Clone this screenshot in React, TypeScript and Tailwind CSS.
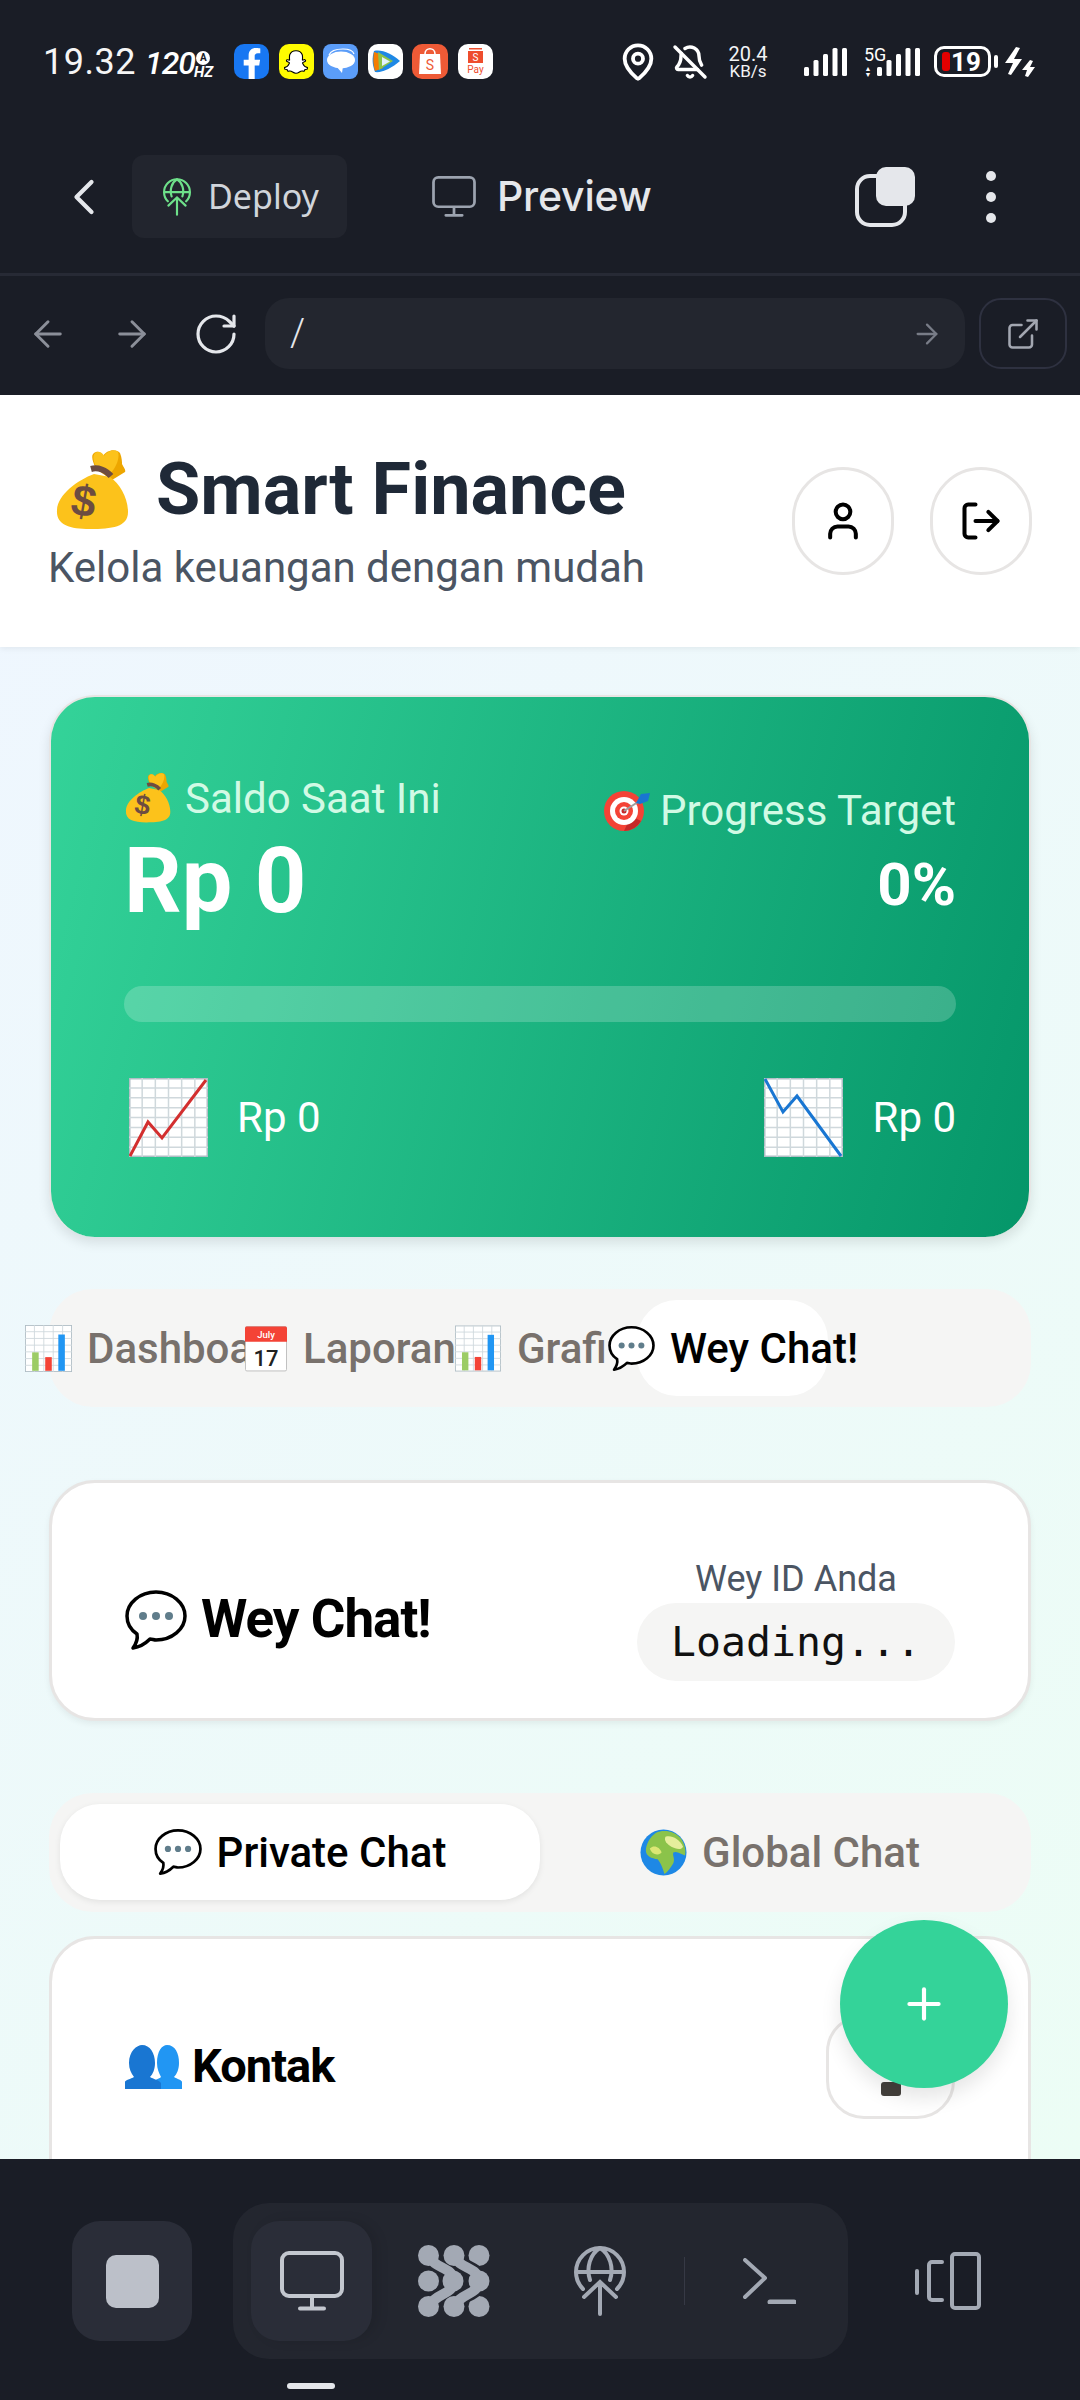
import React from "react";
import { ArrowLeft, ArrowRight, BellOff, ChevronLeft, ExternalLink, LogOut, MapPin, Plus, RotateCw, User } from "lucide-react";
import { FaFacebookF, FaSnapchatGhost } from "react-icons/fa";

type P = { className?: string };

const MoneyBag = ({ className }: P) => (
  <svg viewBox="0 0 75 80" className={className}>
    <path d="M46 19 C42 10 40 4 46 2 C50 1 52 4 53 6 C56 0 66 -2 70 3 C72 8 72 12 72 14 C74 18 76 20 75 22 L62 30 Z" fill="#eda600" transform="translate(-4 0)" />
    <path d="M44 20 C38 10 38 4 43 2 C47 1 49 4 50 6 C53 1 61 -1 64 2 C66 8 62 18 56 24 Z" fill="#fcc21b" />
    <path d="M40 24 C24 30 4 44 3 60 C2 75 15 79 36 79 C58 79 74 77 74 62 C74 48 66 34 56 27 Z" fill="#fcc21b" />
    <path d="M37 19 C44 17 52 20 57 26" stroke="#6d4c41" strokeWidth="6" fill="none" />
    <text x="30" y="66" fontFamily="Liberation Sans" fontWeight="700" fontSize="44" fill="#6d4c41" textAnchor="middle" transform="rotate(10 30 50)">$</text>
  </svg>
);

const Target = ({ className }: P) => (
  <svg viewBox="0 0 48 44" className={className}>
    <circle cx="21" cy="23" r="20" fill="#f44336" />
    <path d="M21 43 A20 20 0 0 0 38 33 L28 28 Z" fill="#c62828" />
    <circle cx="21" cy="23" r="14" fill="#fff" />
    <circle cx="21" cy="23" r="9" fill="#f44336" />
    <circle cx="21" cy="23" r="4.5" fill="#fff" />
    <circle cx="21" cy="23" r="2.5" fill="#c62828" />
    <path d="M21 23 L38 12" stroke="#9e9e9e" strokeWidth="2" />
    <path d="M33 15 L38 6 L47 5 L45 13 L37 16 Z" fill="#1976d2" />
  </svg>
);

const Grid = ({ n = 6, m = 8 }: { n?: number; m?: number }) => (
  <>
    <rect x="0.75" y="0.75" width="77.5" height="77.5" fill="#fff" stroke="#b0bec5" strokeWidth="1.5" />
    {Array.from({ length: n - 1 }, (_, i) => (
      <path key={`v${i}`} d={`M${((i + 1) * 79) / n} 0V79`} stroke="#cfd8dc" strokeWidth="1.5" />
    ))}
    {Array.from({ length: m - 1 }, (_, i) => (
      <path key={`h${i}`} d={`M0 ${((i + 1) * 79) / m}H79`} stroke="#cfd8dc" strokeWidth="1.5" />
    ))}
  </>
);

const ChartUp = ({ className }: P) => (
  <svg viewBox="0 0 79 79" className={className}>
    <Grid />
    <path d="M1 78 L19 44 L33 60 L77 2" stroke="#d32f2f" strokeWidth="3" fill="none" />
  </svg>
);
const ChartDown = ({ className }: P) => (
  <svg viewBox="0 0 79 79" className={className}>
    <Grid />
    <path d="M1 1 L19 34 L33 18 L77 78" stroke="#1976d2" strokeWidth="3" fill="none" />
  </svg>
);
const BarChart = ({ className }: P) => (
  <svg viewBox="0 0 79 79" className={className}>
    <Grid n={5} m={7} />
    <rect x="12" y="46" width="11" height="31" fill="#9ccc65" />
    <rect x="34" y="54" width="11" height="23" fill="#f44336" />
    <rect x="56" y="16" width="11" height="61" fill="#2196f3" />
  </svg>
);
const Calendar = ({ className }: P) => (
  <svg viewBox="0 0 44 48" className={className}>
    <rect x="0.5" y="1" width="43" height="46.5" rx="1.5" fill="#fff" stroke="#bdbdbd" />
    <path d="M0 2.5 A2 2 0 0 1 2 1 H42 A2 2 0 0 1 44 2.5 V17 H0 Z" fill="#f44336" />
    <text x="22" y="13" fontFamily="Roboto" fontSize="10" fill="#fff" textAnchor="middle">July</text>
    <text x="22" y="42" fontFamily="Roboto" fontWeight="500" fontSize="23" fill="#212121" textAnchor="middle">17</text>
  </svg>
);
const Bubble = ({ className }: P) => (
  <svg viewBox="0 0 62 62" className={className}>
    <path d="M31 3 C15 3 2 14 2 27 C2 35 6 41 12 45 C13 50 11 55 8 59 C15 58 21 54 25 50 C27 50 29 51 31 51 C47 51 60 40 60 27 C60 14 47 3 31 3 Z" fill="#fff" stroke="#000" strokeWidth="3.5" strokeLinejoin="round" />
    <circle cx="18" cy="27" r="4" fill="#607d8b" />
    <circle cx="31" cy="27" r="4" fill="#607d8b" />
    <circle cx="44" cy="27" r="4" fill="#607d8b" />
  </svg>
);
const Globe = ({ className }: P) => (
  <svg viewBox="0 0 48 48" className={className}>
    <circle cx="24" cy="24" r="23.5" fill="#1e88e5" />
    <path d="M16 4 C24 0 36 2 42 10 C46 16 47 22 46 27 C42 26 38 22 34 24 C33 28 36 30 34 35 C31 40 28 44 25 46 C23 40 22 36 18 31 C12 30 6 28 6 22 C6 16 10 8 16 4 Z" fill="#8bc34a" />
    <path d="M26 8 C32 6 40 10 44 18 C42 22 36 20 32 18 C28 16 24 12 26 8 Z" fill="#e6ee9c" />
    <path d="M10 20 C14 16 20 18 22 24 C18 28 12 26 10 20 Z" fill="#dce775" />
  </svg>
);
const Busts = ({ className }: P) => (
  <svg viewBox="0 0 57 44" className={className}>
    <path d="M32 18 C32 6 37 0 42 0 C50 0 54 8 54 18 C54 24 52 29 49 32 C52 34 57 35 57 37 V44 H28 V37 C30 34 34 34 36 32 C34 28 32 24 32 18 Z" fill="#2196f3" />
    <path d="M4 18 C4 6 12 0 17 0 C25 0 30 8 30 18 C30 24 28 29 25 32 C28 34 34 35 36 38 V44 H0 V37 C0 35 6 34 9 32 C6 28 4 24 4 18 Z" fill="#1976d2" />
  </svg>
);

const MonitorIcon = ({ className }: P) => (
  <svg viewBox="0 0 64 60" fill="none" stroke="currentColor" strokeWidth="4" strokeLinecap="round" className={className}>
    <rect x="2" y="2" width="60" height="43" rx="7" />
    <path d="M32 46 V56 M20 57.5 H44" />
  </svg>
);
const GlobeUp = ({ className, sw = 4 }: P & { sw?: number }) => (
  <svg viewBox="0 0 52 70" fill="none" stroke="currentColor" strokeWidth={sw} strokeLinecap="round" className={className}>
    <path d="M9 43 A24 24 0 1 1 43 43" />
    <path d="M16 34 C12 22 16 8 26 2 C36 8 40 22 36 34" />
    <path d="M3 26 H49" />
    <path d="M26 36 V68 M10 51 L26 36 L42 51" />
  </svg>
);
const chevA = "M11 11 C16 24 36 22 36 36 C36 50 16 48 11 62";
const chevB = "M36 11 C41 24 61 22 61 36 C61 50 41 48 36 62";
const Blobs = ({ className }: P) => (
  <svg viewBox="0 0 72 72" className={className} fill="#a3a9b4">
    <circle cx="10.5" cy="36" r="10.5" />
    <circle cx="61" cy="10.5" r="10.5" />
    <circle cx="61" cy="61.5" r="10.5" />
    <path d={chevA} fill="none" stroke="#23262f" strokeWidth="15" />
    <path d={chevA} fill="none" stroke="#a3a9b4" strokeWidth="10" />
    <circle cx="10.5" cy="10.5" r="10.5" />
    <circle cx="35" cy="36" r="10.5" />
    <circle cx="10.5" cy="61.5" r="10.5" />
    <path d={chevB} fill="none" stroke="#23262f" strokeWidth="15" />
    <path d={chevB} fill="none" stroke="#a3a9b4" strokeWidth="10" />
    <circle cx="36" cy="10.5" r="10.5" />
    <circle cx="61" cy="36" r="10.5" />
    <circle cx="36" cy="61.5" r="10.5" />
  </svg>
);
const Terminal = ({ className }: P) => (
  <svg viewBox="0 0 53 46" fill="none" stroke="currentColor" strokeWidth="4" strokeLinecap="round" strokeLinejoin="round" className={className}>
    <path d="M2 2 L22 20 L2 39" />
    <path d="M27 44 H51" strokeWidth="5" />
  </svg>
);
const DeviceIcon = ({ className }: P) => (
  <svg viewBox="0 0 66 58" fill="none" stroke="currentColor" strokeWidth="4" strokeLinecap="round" strokeLinejoin="round" className={className}>
    <path d="M2 19 V41" />
    <path d="M27 10 H17 A3 3 0 0 0 14 13 V45 A3 3 0 0 0 17 48 H27" />
    <rect x="37" y="2" width="27" height="54" rx="3" />
  </svg>
);
const CopyIcon = ({ className }: P) => (
  <svg viewBox="0 0 60 60" className={className}>
    <rect x="2" y="9" width="48" height="49" rx="13" fill="none" stroke="#e5e7eb" strokeWidth="4" />
    <rect x="21" y="0" width="39" height="39" rx="10" fill="#e5e7eb" />
  </svg>
);

const Bars = ({ className }: P) => (
  <svg viewBox="0 0 44 30" fill="#fff" className={className}>
    <rect x="0" y="20" width="5" height="9" rx="1.5" />
    <rect x="9.5" y="13" width="5" height="16" rx="1.5" />
    <rect x="19" y="7" width="5" height="22" rx="1.5" />
    <rect x="28.5" y="1" width="5" height="28" rx="1.5" />
    <rect x="38" y="1" width="5" height="28" rx="1.5" />
  </svg>
);
const Bolts = ({ className }: P) => (
  <svg viewBox="0 0 30 30" fill="#fff" className={className}>
    <path d="M11 0 L15 1 L9 12 L17 12 L6 28 L3 27 L8 16 L0 16 Z" />
    <path d="M25 13 L28 14 L25 20 L30 20 L23 30 L20 29 L22 23 L17 23 Z" />
  </svg>
);

const MsgIcon = ({ className }: P) => (
  <svg viewBox="0 0 35 35" className={className}>
    <rect width="35" height="35" rx="8" fill="#5b9df9" />
    <path d="M6 11 C8 6 14 5 20 5 C26 5 30 7 31 10" stroke="#fff" strokeWidth="1.2" fill="none" />
    <ellipse cx="18" cy="16" rx="14" ry="8.5" fill="#fff" />
    <path d="M13 22 L19 29 L20 22 Z" fill="#fff" />
  </svg>
);
const PlayIcon = ({ className }: P) => (
  <svg viewBox="0 0 35 35" className={className}>
    <rect width="35" height="35" rx="10" fill="#fff" />
    <path d="M6 7 C14 5 24 10 32 17 C24 24 14 29 7 28 C4 20 4 14 6 7 Z" fill="#1e88e5" />
    <path d="M6 8 C5 14 5 21 7 27 L15 24 L12 10 Z" fill="#f57c00" />
    <path d="M10 8 L25 17 L11 26 Z" fill="#8bc34a" />
    <path d="M14 13 L22 17.5 L14 22 Z" fill="#e3f2fd" />
  </svg>
);
const ShopeeIcon = ({ className }: P) => (
  <svg viewBox="0 0 36 35" className={className}>
    <rect width="36" height="35" rx="10" fill="#ee5a36" />
    <path d="M8 10 H28 L29 30 H7 Z" fill="#fff" />
    <path d="M13 10 C13 3 23 3 23 10" stroke="#fff" strokeWidth="1.6" fill="none" />
    <text x="18" y="26" fontFamily="Roboto" fontSize="14" fill="#ee5a36" textAnchor="middle">S</text>
  </svg>
);
const PayIcon = ({ className }: P) => (
  <svg viewBox="0 0 35 35" className={className}>
    <rect width="35" height="35" rx="10" fill="#fff" />
    <path d="M10 7 H25 V19 H10 Z M11 4 H24 V5.5 H11 Z" fill="#ee4d2d" />
    <text x="17.5" y="17" fontFamily="Roboto" fontSize="10" fill="#fff" textAnchor="middle">S</text>
    <text x="17.5" y="29" fontFamily="Roboto" fontSize="10" fill="#ee4d2d" textAnchor="middle">Pay</text>
  </svg>
);

export default function App() {
  return (
    <div className="relative w-[1080px] h-[2400px] overflow-hidden flex flex-col bg-[#1a1d26] font-['Roboto',sans-serif]">
      {/* status bar */}
      <div className="h-[90px] shrink-0 flex items-start pt-[44px] pl-[43px] text-white">
        <span className="w-[85px] text-[36px] leading-[37px] tracking-[0.5px] text-[#f5f5f5]">19.32</span>
        <span className="ml-[17px] w-[72px] flex items-end h-[35px]">
          <span className="text-[32px] leading-[32px] font-medium italic tracking-[-1px]">120</span>
          <span className="flex flex-col items-center -ml-[1px]">
            <span className="w-[14px] h-[14px] rounded-full bg-white text-[#1a1d26] text-[10px] leading-[14px] text-center font-bold">A</span>
            <span className="text-[15px] leading-[14px] font-bold italic">HZ</span>
          </span>
        </span>
        <span className="ml-[17px] flex gap-[9.5px]">
          <span className="w-[35px] h-[35px] rounded-[10px] bg-[#1877f2] flex items-end justify-center overflow-hidden">
            <FaFacebookF className="w-[26px] h-[31px] text-white" />
          </span>
          <span className="w-[35px] h-[35px] rounded-[10px] bg-[#fffc00] flex items-center justify-center">
            <FaSnapchatGhost className="w-[24px] h-[24px] text-white [&_path]:stroke-black [&_path]:[stroke-width:24px]" />
          </span>
          <MsgIcon className="w-[35px] h-[35px]" />
          <PlayIcon className="w-[35px] h-[35px]" />
          <ShopeeIcon className="w-[36px] h-[35px]" />
          <PayIcon className="w-[35px] h-[35px]" />
        </span>
        <span className="ml-auto mr-[45px] flex items-center h-[35px]">
          <MapPin className="w-[40px] h-[40px] text-white" strokeWidth={2.3} />
          <BellOff className="ml-[14px] w-[36px] h-[36px] text-white" strokeWidth={2.3} />
          <span className="ml-[18px] w-[44px] flex flex-col items-center text-[#f3f4f6]">
            <span className="text-[20px] leading-[18px]">20.4</span>
            <span className="text-[17px] leading-[16px]">KB/s</span>
          </span>
          <Bars className="ml-[34px] w-[44px] h-[30px]" />
          <span className="ml-[16px] w-[14px] flex flex-col items-start">
            <span className="text-[18px] leading-[18px] whitespace-nowrap">5G</span>
            <span className="w-[8px] text-[7px] leading-[6px] text-center mt-[2px]">▲<br />▼</span>
          </span>
          <Bars className="w-[44px] h-[30px] -ml-[1px]" />
          <span className="ml-[13px] w-[57px] h-[31px] border-[3px] border-white rounded-[10px] flex items-center pl-[5px] gap-[1px]">
            <span className="w-[8px] h-[19px] rounded-[3px] bg-[#e30000]" />
            <span className="text-[26px] leading-[26px] font-bold">19</span>
          </span>
          <span className="ml-[3px] w-[4px] h-[13px] bg-white rounded-[2px]" />
          <Bolts className="ml-[7px] w-[30px] h-[30px]" />
        </span>
      </div>

      {/* app bar */}
      <div className="h-[183px] shrink-0 pt-[65px] flex items-start">
        <div className="h-[83px] flex items-center">
          <ChevronLeft className="ml-[54px] w-[60px] h-[60px] text-[#e5e7eb]" strokeWidth={1.7} />
          <div className="ml-[18px] w-[215px] h-[83px] bg-[#22252e] rounded-[12px] flex items-center pl-[31px]">
            <GlobeUp className="w-[28px] h-[38px] text-[#6ee08a]" sw={4} />
            <span className="ml-[17px] text-[34px] text-[#d1d5db] font-['Noto_Sans',sans-serif]">Deploy</span>
          </div>
          <MonitorIcon className="ml-[85px] w-[44px] h-[41px] text-[#9ca3af]" />
          <span className="ml-[21px] w-[156px] text-[41px] font-medium text-[#e5e7eb] font-['Inter',sans-serif] tracking-[-0.2px] whitespace-nowrap">Preview</span>
          <CopyIcon className="ml-[202px] w-[60px] h-[60px]" />
          <div className="ml-[71px] flex flex-col gap-[11px]">
            <span className="w-[10px] h-[10px] rounded-full bg-[#e5e7eb]" />
            <span className="w-[10px] h-[10px] rounded-full bg-[#e5e7eb]" />
            <span className="w-[10px] h-[10px] rounded-full bg-[#e5e7eb]" />
          </div>
        </div>
      </div>
      <div className="h-[3px] shrink-0 bg-[#272a35]" />

      {/* url bar */}
      <div className="h-[119px] shrink-0 pt-[22px] flex items-start">
        <div className="h-[71px] flex items-center">
          <ArrowLeft className="ml-[27px] w-[42px] h-[42px] text-[#8b8f99]" strokeWidth={1.7} />
          <ArrowRight className="ml-[42px] w-[42px] h-[42px] text-[#8b8f99]" strokeWidth={1.7} />
          <RotateCw className="ml-[39px] w-[48px] h-[48px] text-[#e5e7eb]" strokeWidth={1.6} />
          <div className="ml-[25px] w-[700px] h-[71px] rounded-[24px] bg-[#23262f] flex items-center pl-[25px] pr-[22px] justify-between">
            <span className="text-[38px] font-light text-[#e5e7eb]">/</span>
            <ArrowRight className="w-[32px] h-[32px] text-[#787c87]" strokeWidth={1.7} />
          </div>
          <div className="ml-[14px] w-[88px] h-[71px] rounded-[22px] border-[2.5px] border-[#2e3140] flex items-center justify-center">
            <ExternalLink className="w-[36px] h-[36px] text-[#a3a7b1]" strokeWidth={1.7} />
          </div>
        </div>
      </div>

      {/* web view */}
      <div className="flex-1 min-h-0 overflow-hidden flex flex-col bg-[linear-gradient(135deg,#eff6ff,#ecfdf5)]">
        <header className="h-[252px] shrink-0 bg-white shadow-[0_2px_6px_rgba(0,0,0,0.06)] flex items-start justify-between pl-[48px] pr-[48px] relative">
          <div className="pt-[54px]">
            <div className="flex items-center h-[82px]">
              <MoneyBag className="ml-[6px] w-[75px] h-[80px]" />
              <h1 className="ml-[27px] text-[72px] leading-[82px] font-bold text-[#1f2937]">Smart Finance</h1>
            </div>
            <p className="mt-[11px] text-[42px] leading-[52px] text-[#4b5563]">Kelola keuangan dengan mudah</p>
          </div>
          <div className="pt-[72px] flex gap-[36px]">
            <div className="w-[102px] h-[108px] rounded-full border-[3px] border-[#e7e5e4] bg-white flex items-center justify-center">
              <User className="w-[44px] h-[44px] text-black" strokeWidth={2.2} />
            </div>
            <div className="w-[102px] h-[108px] rounded-full border-[3px] border-[#e7e5e4] bg-white flex items-center justify-center">
              <LogOut className="w-[44px] h-[44px] text-black" strokeWidth={2.2} />
            </div>
          </div>
        </header>

        <main className="px-[49px] pt-[48px] flex flex-col">
          {/* balance */}
          <section className="h-[542px] rounded-[46px] border-2 border-[#e7e5e4] border-b-0 shadow-[0_6px_12px_rgba(0,0,0,0.1)] bg-[linear-gradient(105deg,#34d399,#059669)] px-[73px] pt-[77px] text-white">
            <div className="flex justify-between items-start">
              <div>
                <div className="flex items-center h-[48px] text-[42px] text-[#d1fae5]">
                  <MoneyBag className="w-[47px] h-[50px]" />
                  <span className="ml-[14px]">Saldo Saat Ini</span>
                </div>
                <div className="mt-[12px] text-[90px] leading-[96px] font-bold">Rp 0</div>
              </div>
              <div className="pt-[12px] text-right">
                <div className="flex items-center h-[48px] text-[42px] text-[#d1fae5]">
                  <Target className="w-[48px] h-[44px]" />
                  <span className="ml-[9px]">Progress Target</span>
                </div>
                <div className="mt-[16px] text-[60px] leading-[70px] font-bold">0%</div>
              </div>
            </div>
            <div className="mt-[56px] h-[36px] rounded-full bg-white/20" />
            <div className="mt-[56px] h-[79px] flex justify-between items-center text-[42px]">
              <div className="flex items-center pl-[5px]">
                <ChartUp className="w-[79px] h-[79px]" />
                <span className="ml-[29px]">Rp 0</span>
              </div>
              <div className="flex items-center">
                <ChartDown className="w-[79px] h-[79px]" />
                <span className="ml-[30px]">Rp 0</span>
              </div>
            </div>
          </section>

          {/* main tabs */}
          <nav className="mt-[52px] h-[118px] rounded-[44px] bg-[#f5f5f4] flex items-center text-[42px] font-medium text-[#78716c]">
            <div className="-ml-[24px] w-[220px] shrink-0 flex items-center">
              <BarChart className="w-[47px] h-[47px] shrink-0" />
              <span className="ml-[15px] w-[158px] overflow-hidden whitespace-nowrap">Dashboard</span>
            </div>
            <div className="w-[210px] shrink-0 flex items-center">
              <Calendar className="w-[42px] h-[47px] shrink-0" />
              <span className="ml-[16px] w-[152px] overflow-hidden whitespace-nowrap">Laporan</span>
            </div>
            <div className="w-[153px] shrink-0 flex items-center">
              <BarChart className="w-[46px] h-[47px] shrink-0" />
              <span className="ml-[16px] w-[91px] overflow-hidden whitespace-nowrap">Grafik</span>
            </div>
            <div className="relative shrink-0 flex items-center text-black h-[96px]">
              <span className="absolute left-[29px] top-0 w-[191px] h-[96px] rounded-[40px] bg-white" />
              <Bubble className="relative w-[47px] h-[47px] shrink-0" />
              <span className="relative ml-[15px] whitespace-nowrap">Wey Chat!</span>
            </div>
          </nav>

          {/* wey card */}
          <section className="mt-[73px] h-[241px] rounded-[46px] border-[3px] border-[#e7e5e4] bg-white shadow-[0_3px_6px_rgba(0,0,0,0.06)] px-[73px] pt-[38px] flex items-center justify-between">
            <div className="flex items-center">
              <Bubble className="w-[62px] h-[62px]" />
              <h2 className="ml-[14px] text-[53px] font-bold text-black tracking-[-1px]">Wey Chat!</h2>
            </div>
            <div className="flex flex-col items-center">
              <span className="text-[36px] leading-[42px] text-[#4b5563]">Wey ID Anda</span>
              <span className="mt-[3px] w-[318px] h-[78px] rounded-full bg-[#f5f5f4] flex items-center justify-center text-[41.5px] text-[#111] font-['DejaVu_Sans_Mono',monospace]">Loading...</span>
            </div>
          </section>

          {/* sub tabs */}
          <nav className="mt-[72px] h-[119px] rounded-[44px] bg-[#f5f5f4] p-[11px] flex text-[42px] font-medium">
            <div className="w-[480px] h-[96px] rounded-[40px] bg-white shadow-[0_2px_6px_rgba(0,0,0,0.08)] flex items-center justify-center text-black gap-[15px]">
              <Bubble className="w-[48px] h-[48px]" />
              <span>Private Chat</span>
            </div>
            <div className="flex-1 flex items-center justify-center text-[#78716c] gap-[15px]">
              <Globe className="w-[47px] h-[47px]" />
              <span>Global Chat</span>
            </div>
          </nav>

          {/* contacts */}
          <section className="mt-[24px] h-[400px] shrink-0 rounded-[46px] border-[3px] border-[#e7e5e4] bg-white px-[73px] pt-[75px] flex items-start justify-between">
            <div className="flex items-center h-[105px]">
              <Busts className="w-[57px] h-[44px]" />
              <h3 className="ml-[10px] text-[47px] font-bold text-black tracking-[-1px]">Kontak</h3>
            </div>
            <div className="w-[129px] h-[105px] rounded-[38px] border-[3px] border-[#e7e5e4] flex items-end justify-center pb-[20px]">
              <span className="w-[20px] h-[14px] bg-[#44403c] rounded-[3px]" />
            </div>
          </section>
        </main>
      </div>

      {/* floating button */}
      <button className="absolute left-[840px] top-[1920px] w-[168px] h-[168px] rounded-full bg-[#34d399] shadow-[0_10px_20px_rgba(0,0,0,0.1)] flex items-center justify-center">
        <Plus className="w-[50px] h-[50px] text-white" strokeWidth={2} />
      </button>

      {/* bottom bar */}
      <div className="h-[241px] shrink-0 pt-[44px] bg-[#1a1d26]">
        <div className="h-[156px] flex items-center pl-[72px]">
          <div className="w-[120px] h-[120px] rounded-[28px] bg-[#2a2d38] flex items-center justify-center">
            <span className="w-[53px] h-[53px] rounded-[10px] bg-[#bcc0c9]" />
          </div>
          <div className="ml-[41px] w-[615px] h-[156px] rounded-[36px] bg-[#23262f] flex items-center pl-[18px]">
            <div className="w-[121px] h-[120px] rounded-[28px] bg-[#2a2d38] shadow-[6px_0_12px_rgba(0,0,0,0.1)] flex items-center justify-center text-[#c3c7cf]">
              <MonitorIcon className="w-[64px] h-[60px]" />
            </div>
            <div className="ml-[21px] w-[121px] flex justify-center">
              <Blobs className="w-[72px] h-[72px]" />
            </div>
            <div className="ml-[25px] w-[121px] flex justify-center text-[#a3a9b4]">
              <GlobeUp className="w-[52px] h-[70px]" />
            </div>
            <span className="ml-[24px] w-[1px] h-[48px] bg-[#363945]" />
            <div className="ml-[24px] w-[121px] flex justify-center text-[#a3a9b4]">
              <Terminal className="w-[53px] h-[46px]" />
            </div>
          </div>
          <DeviceIcon className="ml-[67px] w-[66px] h-[58px] text-[#a3a9b4]" />
        </div>
        <div className="mt-[24px] ml-[287px] w-[48px] h-[6px] rounded-full bg-[#e5e7eb]" />
      </div>
    </div>
  );
}
